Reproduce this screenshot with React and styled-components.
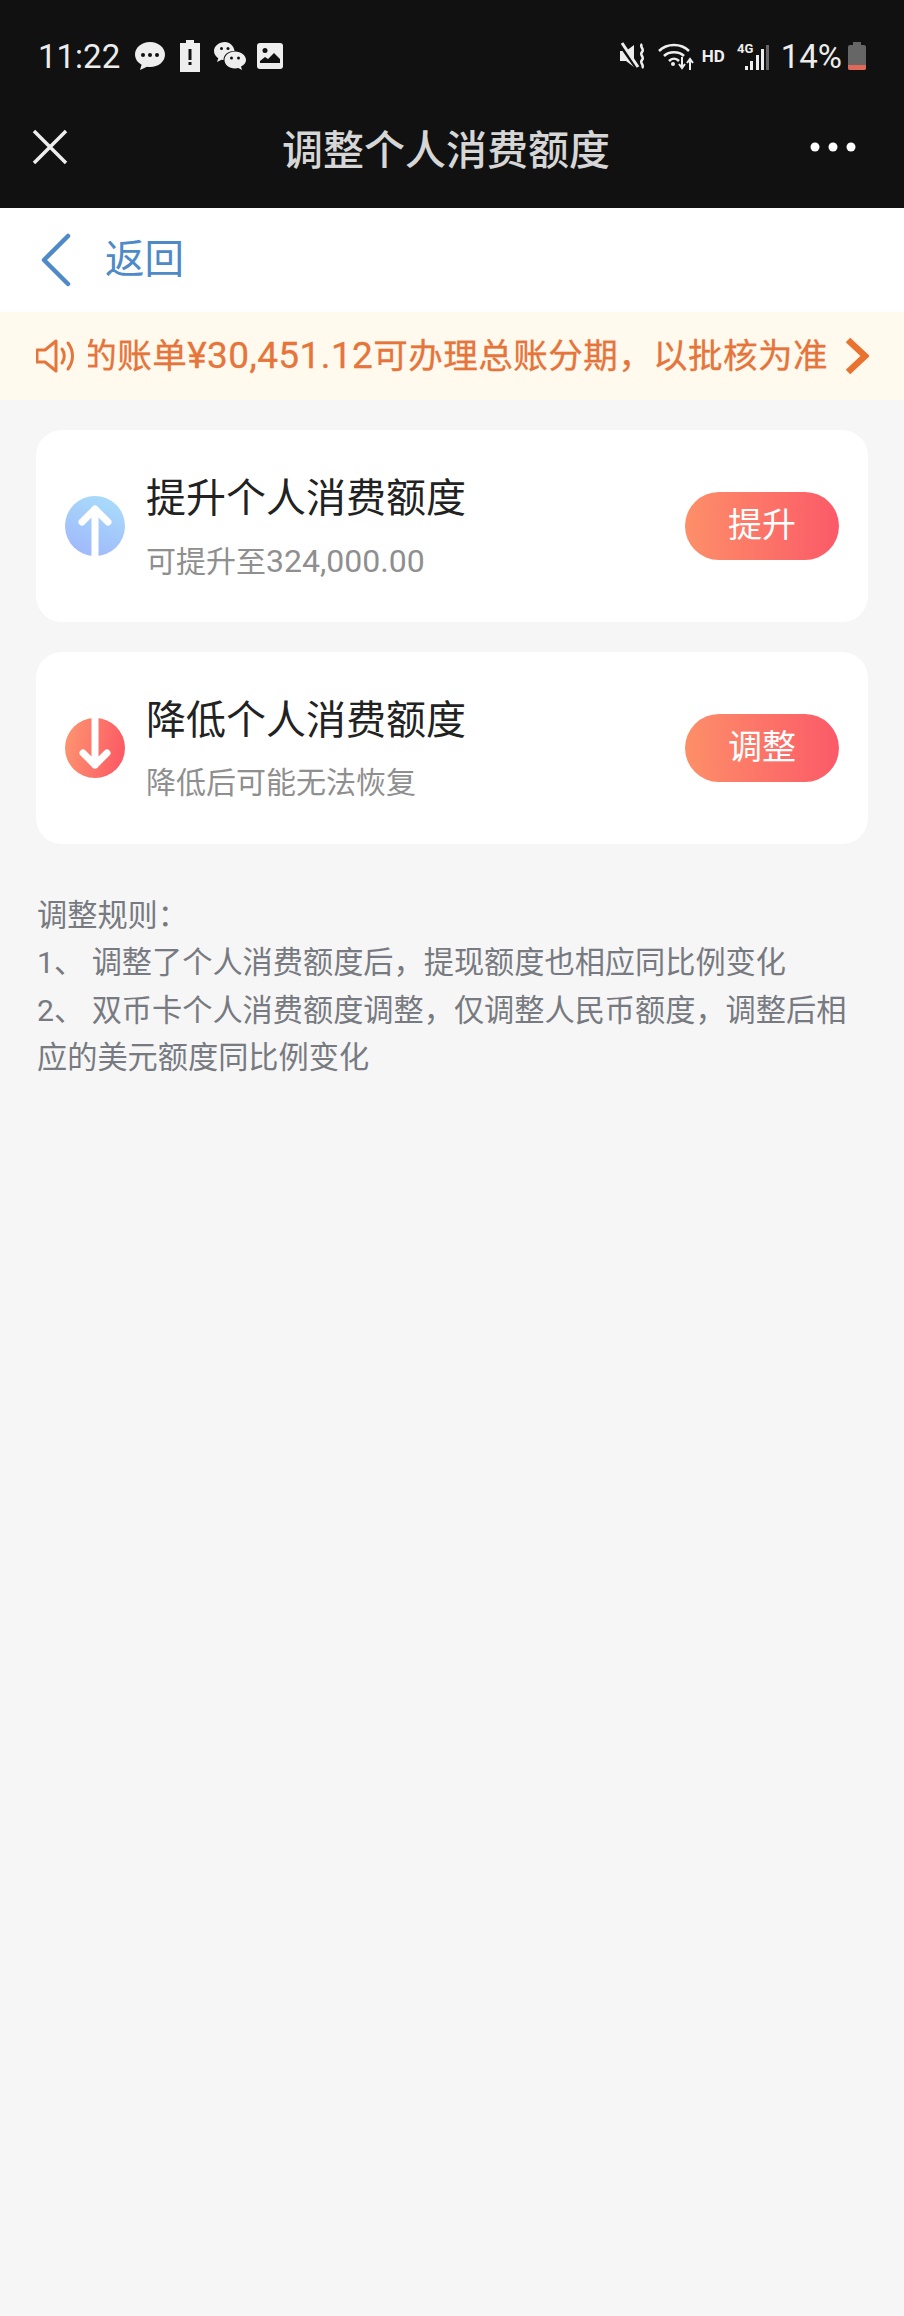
import React from "react";
import styled, { createGlobalStyle } from "styled-components";

const Global = createGlobalStyle`
  html, body { margin: 0; padding: 0; background: #f6f6f6; }
  body { font-family: "Roboto", "Noto Sans CJK SC", sans-serif; }
`;
const CJK = `"Noto Sans CJK SC", sans-serif`;
const Page = styled.div`width: 904px; height: 2316px; background: #f6f6f6; overflow: hidden; display: flex; flex-direction: column;`;
const Top = styled.div`background: #111112; height: 208px; display: flex; flex-direction: column; flex: none;`;
const Status = styled.div`height: 112px; padding: 0 38px; display: flex; align-items: center; justify-content: space-between; box-sizing: border-box;`;
const Group = styled.div`display: flex; align-items: center;`;
const StatusText = styled.span`font: 400 33px/1 "Roboto", sans-serif; color: #ececec; margin: ${p => p.$margin || "0"};`;
const Hd = styled.span`font: 700 17px/1 "Roboto", sans-serif; color: #eee; margin: 0 12px 0 8px;`;
const Nav = styled.div`flex: 1; display: flex; align-items: center; padding: 0 48px 26px 32px;`;
const NavTitle = styled.div`flex: 1; text-align: center; padding-left: 14px; font: 500 41px/56px ${CJK}; color: #d6d6d6;`;
const Back = styled.div`height: 104px; background: #fff; display: flex; align-items: center; padding-left: 40px; gap: 33px; flex: none;`;
const BackText = styled.span`font: 400 39.5px/1 ${CJK}; color: #4e8ac8; margin-bottom: 8px;`;
const Notice = styled.div`height: 88px; background: #fff9ee; display: flex; align-items: center; padding: 0 35px 0 36px; flex: none; color: #e5753a;`;
const NoticeWindow = styled.div`flex: 1; overflow: hidden; white-space: nowrap; font: 400 34.6px/44px "Roboto", ${CJK}; letter-spacing: 0.4px; -webkit-text-stroke: 0.3px currentColor; display: flex; justify-content: flex-end; margin: 0 17px 0 12px;`;
const NoticeText = styled.span`flex: none;`;
const NoticeAmount = styled.span`font-size: 37px;`;
const Cards = styled.div`padding: 30px 36px 0; display: flex; flex-direction: column; gap: 30px;`;
const Card = styled.div`height: 192px; background: #fff; border-radius: 26px; display: flex; align-items: center; padding: 0 29px; box-sizing: border-box;`;
const Texts = styled.div`flex: 1; margin: 0 0 3px 21px; display: flex; flex-direction: column; gap: 19px;`;
const CardTitle = styled.div`font: 400 40px/54px ${CJK}; color: #222;`;
const CardSub = styled.div`font: 400 30px/40px "Roboto", ${CJK}; color: #8f8f8f;`;
const SubAmount = styled.span`font-size: 32px;`;
const Action = styled.div`width: 154px; height: 68px; border-radius: 34px; background: linear-gradient(90deg, #fd8f68, #fb5a68); color: #fff; font: 400 34px/62px ${CJK}; text-align: center;`;
const Rules = styled.div`margin: 48px 36px 0 37px; font: 400 30.2px/47.3px "Roboto", ${CJK}; color: #777a80;`;

const Circle = ({ up }) => {
  const id = up ? "gu" : "gd";
  return (
    <svg width="60" height="60" viewBox="0 0 60 60">
      <defs>
        {up ? (
          <linearGradient id={id} x1="0.7" y1="0" x2="0.3" y2="1">
            <stop offset="0" stopColor="#a8dcfa" />
            <stop offset="1" stopColor="#a0b8fb" />
          </linearGradient>
        ) : (
          <linearGradient id={id} x1="0" y1="0.3" x2="1" y2="0.5">
            <stop offset="0" stopColor="#fd9470" />
            <stop offset="1" stopColor="#fb5a64" />
          </linearGradient>
        )}
      </defs>
      <circle cx="30" cy="30" r="30" fill={`url(#${id})`} />
      {up ? (
        <path d="M30 60V13M17 26 30 13l13 13" fill="none" stroke="#fff" strokeWidth="7" strokeLinecap="round" strokeLinejoin="round" />
      ) : (
        <path d="M30 0v47M18 35l12 12 12-12" fill="none" stroke="#fff" strokeWidth="7" strokeLinecap="round" strokeLinejoin="round" />
      )}
    </svg>
  );
};

export default function App() {
  return (
    <Page>
      <Global />
      <Top>
        <Status>
          <Group>
            <StatusText>11:22</StatusText>
            <svg width="32" height="30" viewBox="0 0 32 30" style={{ marginLeft: 14 }}><path d="M16 1C7.500 1 1 6.600 1 13.500c0 4.300 2.600 8 6.600 10.200L6 29l7-3.200c1 .2 2 .3 3 .3 8.500 0 15-5.700 15-12.600S24.500 1 16 1z" fill="#eee"/><g fill="#111"><circle cx="9" cy="14" r="2"/><circle cx="16" cy="14" r="2"/><circle cx="23" cy="14" r="2"/></g></svg>
            <svg width="20" height="32" viewBox="0 0 20 32" style={{ marginLeft: 14 }}><path d="M6 0h8v3h6v29H0V3h6z" fill="#eee"/><rect x="8.500" y="9" width="3" height="11" fill="#111"/><rect x="8.500" y="22" width="3" height="3" fill="#111"/></svg>
            <svg width="32" height="28" viewBox="0 0 32 28" style={{ marginLeft: 14 }}><path d="M11 0C5 0 0 4 0 9c0 3 1.700 5.500 4.300 7.200L3 20l4.500-2.300 2 .4C9.500 12 15 8.500 20.500 9c-.5-5-4.700-9-9.500-9z" fill="#eee"/><path d="M21 9.500c-6 0-10.500 3.700-10.500 8.500s4.500 8.500 10.500 8.500c1.200 0 2.300-.2 3.400-.5L28 28l-1-3.500c3-1.600 5-3.800 5-6.500 0-4.800-5-8.500-11-8.500z" fill="#eee"/><g fill="#111"><circle cx="7.500" cy="6.500" r="1.500"/><circle cx="14" cy="6.500" r="1.500"/><circle cx="17.500" cy="16" r="1.500"/><circle cx="24.500" cy="16" r="1.500"/></g></svg>
            <svg width="26" height="26" viewBox="0 0 26 26" style={{ marginLeft: 11 }}><rect width="26" height="26" rx="3" fill="#eee"/><circle cx="8" cy="7.500" r="2.500" fill="#111"/><path d="M3 20v-2l5-4 3 2 6-6 6 6v4z" fill="#111"/></svg>
          </Group>
          <Group>
            <svg width="25" height="28" viewBox="0 0 25 28"><path d="M0 9h6l8-6v22l-8-6H0z" fill="#eee"/><path d="M0 2l17 24" stroke="#111" strokeWidth="4"/><path d="M2 1l16 24" stroke="#eee" strokeWidth="3"/><path d="M22 2c-3 3 3 5 0 8s3 5 0 8 3 5 0 8" fill="none" stroke="#eee" strokeWidth="2.500"/></svg>
            <svg width="36" height="28" viewBox="0 0 36 28" style={{ marginLeft: 13 }}><g fill="none" stroke="#eee" strokeWidth="2.500"><path d="M1 9c8-8 22-8 30 0"/><path d="M6 14c5-5 15-5 20 0"/><path d="M11 19c3-3 7-3 10 0"/></g><circle cx="15" cy="22" r="2" fill="#eee"/><path d="M24 15v11M21 22l3 4 3-4M32 28V18M29 21l3-4 3 4" fill="none" stroke="#eee" strokeWidth="2"/></svg>
            <Hd>HD</Hd>
            <svg width="32" height="30" viewBox="0 0 32 30"><text x="0" y="12" fontFamily="Roboto, sans-serif" fontWeight="700" fontSize="13" fill="#eee">4G</text><g fill="#eee"><rect x="8" y="25" width="3" height="4"/><rect x="13" y="20" width="3" height="9"/><rect x="19" y="14" width="3" height="15"/><rect x="24" y="8" width="3" height="21"/></g><rect x="29" y="4" width="3" height="25" fill="#666"/></svg>
            <StatusText $margin="0 6px 0 12px">14%</StatusText>
            <svg width="18" height="28" viewBox="0 0 18 28"><path d="M5 0h8v3h3a2 2 0 0 1 2 2v21a2 2 0 0 1-2 2H2a2 2 0 0 1-2-2V5a2 2 0 0 1 2-2h3z" fill="#666"/><path d="M0 23h18v3a2 2 0 0 1-2 2H2a2 2 0 0 1-2-2z" fill="#e0695a"/></svg>
          </Group>
        </Status>
        <Nav>
          <svg width="36" height="36" viewBox="0 0 36 36"><path d="M2 2l32 32M34 2L2 34" stroke="#eee" strokeWidth="3.500" /></svg>
          <NavTitle>调整个人消费额度</NavTitle>
          <svg width="46" height="12" viewBox="0 0 46 12"><g fill="#fff"><circle cx="5" cy="6" r="4.500"/><circle cx="23" cy="6" r="4.500"/><circle cx="41" cy="6" r="4.500"/></g></svg>
        </Nav>
      </Top>
      <Back>
        <svg width="32" height="54" viewBox="0 0 32 54"><path d="M28 3 4 27l24 24" fill="none" stroke="#4e8ac8" strokeWidth="4.500" strokeLinecap="round" strokeLinejoin="round"/></svg>
        <BackText>返回</BackText>
      </Back>
      <Notice>
        <svg width="40" height="36" viewBox="0 0 40 36"><path d="M1 12h8L20 3v30L9 24H1z" fill="none" stroke="#e5753a" strokeWidth="3" strokeLinejoin="round"/><path d="M26 11c3 4 3 10 0 14M32 5c6 8 6 18 0 26" fill="none" stroke="#e5753a" strokeWidth="3" strokeLinecap="round"/></svg>
        <NoticeWindow><NoticeText>您的账单<NoticeAmount>¥30,451.12</NoticeAmount>可办理总账分期，以批核为准</NoticeText></NoticeWindow>
        <svg width="24" height="38" viewBox="0 0 24 38"><path d="M3 3l17 16L3 35" fill="none" stroke="#e8722e" strokeWidth="6.500"/></svg>
      </Notice>
      <Cards>
        <Card>
          <Circle up />
          <Texts>
            <CardTitle>提升个人消费额度</CardTitle>
            <CardSub>可提升至<SubAmount>324,000.00</SubAmount></CardSub>
          </Texts>
          <Action>提升</Action>
        </Card>
        <Card>
          <Circle />
          <Texts>
            <CardTitle>降低个人消费额度</CardTitle>
            <CardSub>降低后可能无法恢复</CardSub>
          </Texts>
          <Action>调整</Action>
        </Card>
      </Cards>
      <Rules>
        调整规则：<br />
        1、 调整了个人消费额度后，提现额度也相应同比例变化<br />
        2、 双币卡个人消费额度调整，仅调整人民币额度，调整后相应的美元额度同比例变化
      </Rules>
    </Page>
  );
}
